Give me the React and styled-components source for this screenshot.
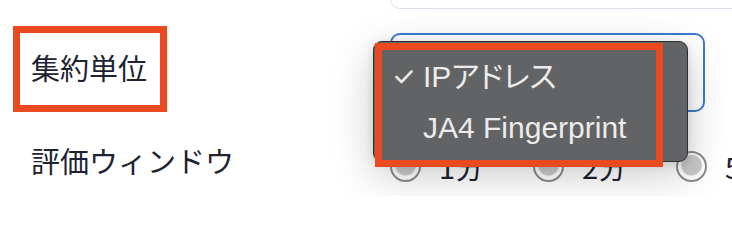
import React from 'react';
import styled, { createGlobalStyle, css } from 'styled-components';

const GlobalStyle = createGlobalStyle`
  html, body {
    margin: 0;
    padding: 0;
    background: #ffffff;
    overflow: hidden;
  }
  body {
    font-family: "Noto Sans CJK JP", "Noto Sans", sans-serif;
    color: #1d2331;
  }
`;

const Form = styled.div`
  display: flex;
  flex-direction: column;
  gap: 24px;
  margin-top: -31px;
  padding-left: 31px;
  width: 700px;
`;

const Row = styled.div`
  display: grid;
  grid-template-columns: 359px 1fr;
  align-items: center;
  min-height: ${(p) => p.$height}px;
`;

const Spacer = styled.div``;

const Label = styled.div`
  position: relative;
  justify-self: start;
  font-size: 29px;
  line-height: 40px;
  padding-bottom: 12px;
  white-space: nowrap;

  ${(p) =>
    p.$marked &&
    css`
      &::after {
        content: '';
        position: absolute;
        left: -18px;
        top: -21px;
        width: 154px;
        height: 86px;
        box-sizing: border-box;
        border: 7px solid #eb4a21;
      }
    `}
`;

const TextInput = styled.div`
  width: 420px;
  height: 40px;
  box-sizing: border-box;
  border: 1.5px solid #d8deea;
  border-radius: 10px;
  background: #fff;
`;

const Select = styled.div`
  position: relative;
  width: 315px;
  height: 79px;
  box-sizing: border-box;
  border: 2px solid #3b7acf;
  border-radius: 10px;
  background: #fff;
`;

const Menu = styled.div`
  position: absolute;
  left: -19px;
  top: 6px;
  width: 315px;
  height: 121px;
  box-sizing: border-box;
  padding-top: 5px;
  background: #626364;
  border: 1px solid #2e2f30;
  border-radius: 9px;
  box-shadow: 0 12px 42px rgba(0, 0, 0, 0.22), 0 2px 8px rgba(0, 0, 0, 0.12);
  z-index: 10;
`;

const MenuMark = styled.div`
  position: absolute;
  left: 1px;
  top: 1px;
  width: 288px;
  height: 124px;
  box-sizing: border-box;
  border: 7px solid #eb4a21;
  pointer-events: none;
`;

const MenuItem = styled.div`
  display: flex;
  align-items: center;
  height: 54px;
  color: #ececec;
  font-family: "Liberation Sans", "Noto Sans CJK JP", sans-serif;
  font-size: 30px;
  font-feature-settings: "palt";
  white-space: nowrap;
`;

const CheckSlot = styled.div`
  width: 49px;
  flex: 0 0 49px;
  display: flex;
  align-items: center;
  padding-left: 21px;
  box-sizing: border-box;
  padding-top: 6px;
`;

const RadioGroup = styled.div`
  display: flex;
  align-items: center;
`;

const RadioOption = styled.label`
  flex: 0 0 143px;
  display: flex;
  align-items: center;
  gap: 18px;
  font-size: 29px;
  line-height: 40px;
  white-space: nowrap;
`;

const RadioCircle = styled.span`
  flex: 0 0 31px;
  width: 31px;
  height: 31px;
  box-sizing: border-box;
  border-radius: 50%;
  border: 2px solid #8b8b8b;
  background: radial-gradient(circle at 50% 45%, #c9c9c9 0 9px, #d4d4d4 10px, #ffffff 11px);
`;

function Check() {
  return (
    <svg width="18" height="14" viewBox="0 0 18 14" fill="none">
      <path d="M1.5 7 L6.5 12 L16.5 1.5" stroke="#e6e6e6" strokeWidth="2.6" strokeLinecap="round" strokeLinejoin="round" />
    </svg>
  );
}

const windows = ['1分', '2分', '5分'];

export default function App() {
  return (
    <>
      <GlobalStyle />
      <Form>
        <Row $height={40}>
          <Spacer />
          <TextInput />
        </Row>
        <Row $height={79}>
          <Label $marked>集約単位</Label>
          <Select>
            <Menu>
              <MenuItem>
                <CheckSlot>
                  <Check />
                </CheckSlot>
                IPアドレス
              </MenuItem>
              <MenuItem>
                <CheckSlot />
                JA4 Fingerprint
              </MenuItem>
              <MenuMark />
            </Menu>
          </Select>
        </Row>
        <Row $height={60}>
          <Label>評価ウィンドウ</Label>
          <RadioGroup>
            {windows.map((w) => (
              <RadioOption key={w}>
                <RadioCircle />
                {w}
              </RadioOption>
            ))}
          </RadioGroup>
        </Row>
      </Form>
    </>
  );
}
